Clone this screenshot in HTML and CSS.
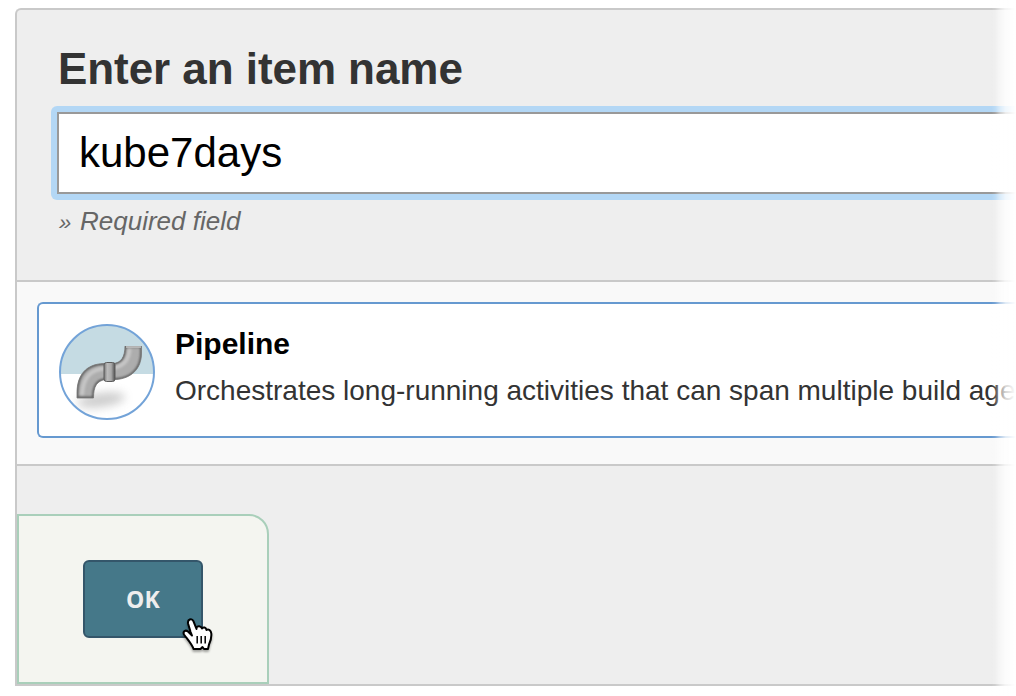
FILE: index.html
```html
<!DOCTYPE html>
<html lang="en">
<head>
<meta charset="utf-8">
<title>New Item</title>
<link rel="stylesheet" href="styles.css">
</head>
<body>
<main class="panel">
  <section class="name-section">
    <h1 class="title"><label for="name">Enter an item name</label></h1>
    <div class="focus-ring"><input class="name-input" id="name" type="text" value="kube7days" spellcheck="false"></div>
    <p class="hint"><span class="hint-mark">»</span>Required field</p>
  </section>
  <section class="types">
    <article class="type-card">
      <div class="type-icon">
        <svg width="92" height="92" viewBox="61 326 92 92" aria-hidden="true">
          <defs>
            <filter id="soft" x="-50%" y="-150%" width="200%" height="400%"><feGaussianBlur stdDeviation="5"/></filter>
            <filter id="blend" x="-20%" y="-20%" width="140%" height="140%"><feGaussianBlur stdDeviation="1.3"/></filter>
            <filter id="edge" x="-20%" y="-20%" width="140%" height="140%"><feGaussianBlur stdDeviation=".5"/></filter>
            <linearGradient id="collar" x1="0" x2="1" y1="0" y2="0"><stop offset="0" stop-color="#777"/><stop offset=".3" stop-color="#bbb"/><stop offset=".65" stop-color="#aaa"/><stop offset="1" stop-color="#505050"/></linearGradient>
            <clipPath id="pipe"><path d="M77 398V393C77 375 86 364 104 363.500H113C121 363 125 357 125 346H141.500V353C141.500 369 131 378.500 116 379.500H106C97 380.500 93.500 386 93.500 398Z"/></clipPath>
          </defs>
          <ellipse cx="101" cy="400" rx="24" ry="7" fill="#888" opacity=".42" filter="url(#soft)" transform="rotate(-8 101 400)"/>
          <g clip-path="url(#pipe)">
            <path fill="#adadad" d="M70 340H150V405H70Z"/>
            <path d="M77 398V393C77 375 86 364 104 363.500H113C121 363 125 357 125 346H141.500V353C141.500 369 131 378.500 116 379.500H106C97 380.500 93.500 386 93.500 398Z" fill="none" stroke="#5c5c5c" stroke-width="2.800" filter="url(#blend)"/>
            <path d="M82 395C83 377 91 369 106 368.500H112C123 366 129 361 129.500 349" fill="none" stroke="#c6c6c6" stroke-width="4" filter="url(#blend)"/>
            <path d="M126 347H141" stroke="#c8c8c8" stroke-width="1.500"/>
          </g>
          <path d="M77 398V393C77 375 86 364 104 363.500H113C121 363 125 357 125 346M141.500 346V353C141.500 369 131 378.500 116 379.500H106C97 380.500 93.500 386 93.500 398H77" fill="none" stroke="#777" stroke-width=".8" filter="url(#edge)"/>
          <rect x="104" y="362.500" width="11" height="19" rx="2.500" fill="url(#collar)" stroke="#5b5b5b" filter="url(#edge)"/>
        </svg>
      </div>
      <div class="type-text">
        <h2 class="type-name">Pipeline</h2>
        <p class="type-description">Orchestrates long-running activities that can span multiple build age</p>
      </div>
    </article>
  </section>
  <footer class="footer">
    <div class="actions">
      <button class="ok" type="button">OK</button>
      <svg class="pointer" width="36" height="42" viewBox="180 615 36 42" aria-hidden="true">
        <path class="hand" d="M190.600 632L188.200 624C187 619 191.800 618 193.500 621.300L196.500 629V627.500C197.500 625.600 201 625.600 202 628.500C203.500 626.500 206 627.500 206.500 630C208.500 628.500 211 630.500 211.300 633.500C211.700 638 211 640.500 209 644.500L208 649H204L202.500 647L200.500 649H193.500C192.500 645 188 640 184 634.500C182.500 631.500 185.500 629.500 188 631.500L192 635.500Z"/>
        <path class="creases" d="M197.200 636V643.500M201.200 636V643.500M205.200 636V643.500"/>
      </svg>
    </div>
  </footer>
</main>
</body>
</html>
```

FILE: styles.css
```css
* { box-sizing: border-box; }
body {
  margin: 0;
  padding: 8px 0 10px 15px;
  height: 696px;
  overflow: hidden;
  background: #fff;
  color: #333;
  font-family: "Liberation Sans", Arial, sans-serif;
}
h1, h2, p { margin: 0; }
.panel {
  display: grid;
  grid-template-rows: 272px 184px 1fr;
  grid-template-columns: 100%;
  height: 678px;
  border: 2px solid #c9c9c9;
  border-right: 0;
  border-radius: 6px 0 0 0;
  background: #eee;
}
/* Fades the panel out toward the right side of the window. */
body::after {
  content: "";
  position: fixed;
  top: 0;
  right: 0;
  width: 25px;
  height: 100%;
  background: linear-gradient(to right, transparent, rgba(255,255,255,.12) 16%, rgba(255,255,255,.5) 35%, rgba(255,255,255,.8) 58%, #fff);
  pointer-events: none;
}
.name-section {
  padding: 33px 0 0 34px;
  border-bottom: 2px solid #c9c9c9;
}
.title { padding-left: 7px; font-size: 44px; line-height: 52px; letter-spacing: -.06px; }
.focus-ring {
  margin-top: 11px;
  padding: 6px 0 6px 6px;
  border-radius: 6px 0 0 6px;
  background: #b3d7f5;
}
.name-input {
  display: block;
  width: 100%;
  height: 82px;
  padding: 0 20px 0;
  border: 2px solid #999;
  border-right: 0;
  border-radius: 0;
  outline: none;
  background: #fff;
  color: #000;
  font: 42px "Liberation Sans", Arial, sans-serif;
}
.hint {
  margin: 6px 0 0 8px;
  color: #666;
  font-size: 26px;
  font-style: italic;
  line-height: 30px;
}
.hint-mark { display: inline-block; width: 21px; font-size: 22px; }
.types {
  padding: 20px 0 26px 20px;
  border-bottom: 2px solid #c9c9c9;
  background: #f9f9f9;
}
.type-card {
  display: flex;
  gap: 20px;
  height: 136px;
  padding: 20px 0 20px 20px;
  border: 2px solid #6699d0;
  border-right: 0;
  border-radius: 6px 0 0 6px;
  background: #fff;
}
.type-icon {
  flex: none;
  display: grid;
  place-items: center;
  width: 96px;
  height: 96px;
  border: 2px solid #73a3d8;
  border-radius: 50%;
  overflow: hidden;
  background: linear-gradient(#c5dbe3 48px, #fff 48px);
}
.type-text { white-space: nowrap; }
.type-name { color: #000; font-size: 30px; line-height: 40px; }
.type-description { margin-top: 9px; font-size: 28px; line-height: 36px; }
.footer { display: flex; align-items: flex-end; }
.actions {
  position: relative;
  display: grid;
  place-items: center;
  width: 252px;
  height: 170px;
  border: 2px solid #a9cfba;
  border-radius: 0 20px 0 0;
  background: #f4f5f0;
}
.ok {
  width: 120px;
  height: 78px;
  padding: 0 0 1px;
  border: 2px solid #34566a;
  border-radius: 6px;
  background: #457889;
  color: #eee;
  font: 700 23px "Open Sans", "Noto Sans", sans-serif;
  letter-spacing: .3px;
}
.pointer { position: absolute; left: 161px; top: 99px; filter: drop-shadow(0 2px 1px #0005); }
.hand { fill: #fff; stroke: #000; stroke-width: 2; stroke-linejoin: round; }
.creases { fill: none; stroke: #000; stroke-width: 1.5; }
```
